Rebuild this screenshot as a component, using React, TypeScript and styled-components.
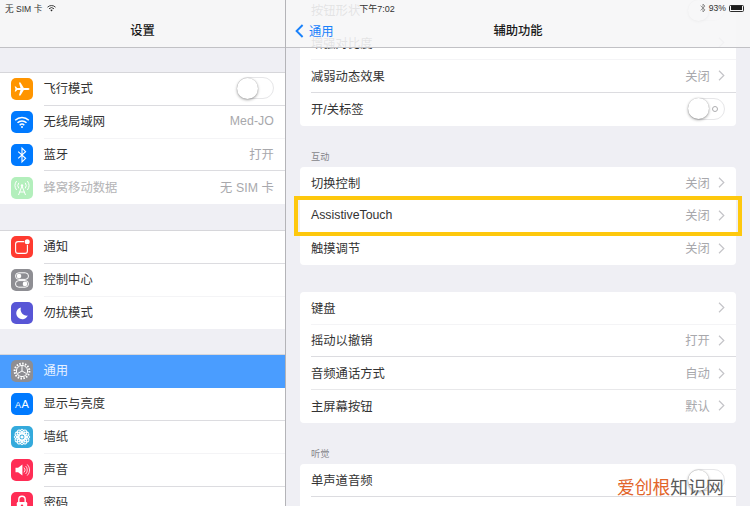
import * as React from "react";
import styled, { createGlobalStyle } from "styled-components";

const GlobalStyle = createGlobalStyle`
  html, body {
    margin: 0;
    padding: 0;
    background: #efeff4;
  }
  body {
    font-family: "Liberation Sans", "Noto Sans CJK SC", sans-serif;
    color: #1c1c1e;
  }
`;

const Screen = styled.div`
  position: relative;
  display: flex;
  width: 750px;
  height: 506px;
  overflow: hidden;
  background: #efeff4;
`;

const StatusBar = styled.div`
  position: absolute;
  z-index: 3;
  top: 0;
  left: 0;
  right: 0;
  height: 16px;
  display: grid;
  grid-template-columns: 1fr auto 1fr;
  align-items: center;
  padding: 0 5px;
  font-size: 8.6px;
  color: #333;
`;

const StatusLeft = styled.div`
  display: flex;
  align-items: center;
  gap: 5px;
`;

const StatusTime = styled.div`
  font-size: 9px;
  margin-left: 4px;
`;

const StatusRight = styled.div`
  display: flex;
  align-items: center;
  justify-content: flex-end;
  gap: 3px;
`;

const Battery = styled.div`
  display: flex;
  align-items: center;
  width: 15px;
  height: 7px;
  border: 1px solid #2a2a2a;
  border-radius: 1.5px;
  box-sizing: border-box;
  padding: 0.5px;
  margin-right: 1px;

  &::before {
    content: "";
    display: block;
    width: 93%;
    height: 100%;
    background: #1c1c1c;
  }
`;

const Master = styled.aside`
  flex: 0 0 285px;
  height: 506px;
  overflow: hidden;
  background: #efeff4;
  border-right: 1px solid #b4b4b8;
`;

const MasterBar = styled.header`
  height: 48px;
  box-sizing: border-box;
  border-bottom: 1px solid #c1c1c5;
  background: #f6f6f7;
  display: flex;
  align-items: flex-end;
  justify-content: center;
  padding-bottom: 7px;
`;

const BarTitle = styled.h1`
  margin: 0;
  font-size: 12.3px;
  line-height: 18px;
  font-weight: 500;
  color: #1a1a1a;
`;

const SideGroup = styled.section<{ $gap: number }>`
  margin-top: ${(p) => p.$gap}px;
  background: #fff;
  border-top: 1px solid #d6d6da;
`;

const SideRow = styled.div<{ $height: number; $selected?: boolean; $disabled?: boolean }>`
  height: ${(p) => p.$height}px;
  display: flex;
  align-items: center;
  padding-left: 11px;
  box-sizing: border-box;
  background: ${(p) => (p.$selected ? "#4a9dff" : "#fff")};
  color: ${(p) => (p.$selected ? "#e6f1ff" : p.$disabled ? "#b4b4b6" : "#333")};
`;

const SideBody = styled.div<{ $line?: string }>`
  flex: 1;
  height: 100%;
  margin-left: 10.5px;
  padding: 0 11px 1.5px 0;
  display: flex;
  align-items: center;
  justify-content: space-between;
  box-sizing: border-box;
  font-size: 12.3px;
  border-bottom: 1px solid ${(p) => p.$line || "transparent"};
`;

const IconTile = styled.span<{ $bg: string }>`
  flex: 0 0 22px;
  width: 22px;
  height: 22px;
  border-radius: 5px;
  background: ${(p) => p.$bg};
  display: flex;
  align-items: center;
  justify-content: center;
  color: #fff;
`;

const ValueText = styled.span`
  font-size: 12.3px;
  letter-spacing: 0.1px;
  color: #a8a8ac;
`;

const Detail = styled.main`
  position: relative;
  flex: 1;
  height: 506px;
  overflow: hidden;
`;

const DetailBar = styled.header`
  position: absolute;
  z-index: 2;
  top: 0;
  left: 0;
  right: 0;
  height: 48px;
  box-sizing: border-box;
  border-bottom: 1px solid #c1c1c5;
  background: rgba(246, 246, 247, 0.9);
  display: grid;
  grid-template-columns: 1fr auto 1fr;
  align-items: end;
  padding: 0 9px 7px;
`;

const BackLink = styled.div`
  display: flex;
  align-items: center;
  gap: 5px;
  height: 18px;
  font-size: 12.3px;
  color: #1a82fb;
`;

const DetailScroll = styled.div`
  margin-top: -5.5px;
  padding: 0 14px;
`;

const Card = styled.section`
  background: #fff;
  border-radius: 4px;
`;

const CardGap = styled.div`
  height: 26.5px;
`;

const SectionLabel = styled.div`
  height: 41.3px;
  box-sizing: border-box;
  padding: 0 0 4px 11px;
  display: flex;
  align-items: flex-end;
  font-size: 9.2px;
  line-height: 12px;
  color: #85858a;
`;

const DetailRow = styled.div<{ $highlight?: boolean }>`
  position: relative;
  height: 32.8px;
  box-sizing: border-box;
  margin-left: 11px;
  padding: 0 11px 1.5px 0;
  display: flex;
  align-items: center;
  justify-content: space-between;
  font-size: 12.3px;
  color: #333;

  ${(p) =>
    p.$highlight &&
    `&::after {
      content: "";
      position: absolute;
      top: -4px;
      bottom: -3px;
      left: -17px;
      right: -6px;
      border: 4px solid #fec80d;
    }`}
`;

const RowLine = styled.div<{ $line: string }>`
  height: 1px;
  margin-top: -1px;
  margin-left: 11px;
  position: relative;
  background: ${(p) => p.$line};
`;

const Trail = styled.div`
  display: flex;
  align-items: center;
  gap: 8px;
`;

const Toggle = styled.div`
  width: 37px;
  height: 22px;
  box-sizing: border-box;
  border: 1px solid #e6e6e8;
  border-radius: 11px;
  background: #fff;
  display: flex;
  align-items: center;
  justify-content: space-between;
  padding-right: 6px;
`;

const ToggleKnob = styled.span`
  width: 21px;
  height: 21px;
  margin-left: -1px;
  border-radius: 50%;
  background: #fff;
  box-shadow: 0 1px 3px rgba(0, 0, 0, 0.38), 0 0 1px rgba(0, 0, 0, 0.25);
`;

const ToggleMark = styled.span`
  width: 6px;
  height: 6px;
  box-sizing: border-box;
  border: 1px solid #adadb0;
  border-radius: 50%;
`;

const Watermark = styled.div`
  position: absolute;
  z-index: 4;
  left: 617px;
  top: 477px;
  font-size: 17.8px;
  line-height: 22px;
  white-space: nowrap;
  color: #5a5a5a;

  b {
    font-weight: 400;
    color: #e2652a;
  }
`;

function Chevron() {
  return (
    <svg width="7" height="11" viewBox="0 0 7 11" fill="none">
      <path d="M1 .8 5.8 5.5 1 10.2" stroke="#c4c4c8" strokeWidth="1.2" />
    </svg>
  );
}

function Glyph(props: { name: string }) {
  const w = { fill: "none", stroke: "#fff" };
  switch (props.name) {
    case "plane":
      return (
        <svg width="22" height="22" viewBox="0 0 22 22">
          <path fill="#fff" d="M18.5 11c0 .8-1 1.1-2 1.1h-3.7l-3.3 5.4H7.9l1.6-5.4H6.1l-1.2 1.5H3.7l.8-2.6-.8-2.6h1.2l1.2 1.5h3.4L7.9 4.5h1.6l3.3 5.4h3.7c1 0 2 .3 2 1.1z" />
        </svg>
      );
    case "wifi":
      return (
        <svg width="22" height="22" viewBox="0 0 22 22" {...w} strokeWidth="1.5">
          <path d="M4.2 9.2a9.8 9.8 0 0 1 13.6 0M6.5 11.8a6.5 6.5 0 0 1 9 0M8.7 14.2a3.3 3.3 0 0 1 4.6 0" />
          <circle cx="11" cy="16" r="1" fill="#fff" stroke="none" />
        </svg>
      );
    case "bluetooth":
      return (
        <svg width="22" height="22" viewBox="0 0 22 22" {...w} strokeWidth="1.1">
          <path d="M7.2 7.7 14.6 14.3 11 18V4L14.6 7.7 7.2 14.3" />
        </svg>
      );
    case "cell":
      return (
        <svg width="22" height="22" viewBox="0 0 22 22" {...w} strokeWidth="1">
          <path d="M11 9 7.5 18M11 9l3.5 9M8.6 15h4.8" />
          <circle cx="11" cy="8.5" r="1.2" fill="#fff" stroke="none" />
          <path d="M7.8 5.8a4.6 4.6 0 0 0 0 5.6M14.2 5.8a4.6 4.6 0 0 1 0 5.6M5.6 4a7.6 7.6 0 0 0 0 9M16.4 4a7.6 7.6 0 0 1 0 9" />
        </svg>
      );
    case "notify":
      return (
        <svg width="22" height="22" viewBox="0 0 22 22">
          <rect x="4.6" y="5.6" width="11.8" height="11.8" rx="2.5" fill="none" stroke="#fff" strokeWidth="1.1" />
          <circle cx="16.2" cy="5.8" r="3.2" fill="#ff3b30" />
          <circle cx="16.2" cy="5.8" r="2.5" fill="#fff" />
        </svg>
      );
    case "control":
      return (
        <svg width="22" height="22" viewBox="0 0 22 22">
          <rect x="4.5" y="3.8" width="13" height="6.6" rx="3.3" fill="none" stroke="#fff" strokeWidth="1" />
          <circle cx="8" cy="7.1" r="2.3" fill="#fff" />
          <rect x="4.5" y="11.6" width="13" height="6.6" rx="3.3" fill="none" stroke="#fff" strokeWidth="1" />
          <circle cx="14" cy="14.9" r="2.3" fill="#fff" />
        </svg>
      );
    case "moon":
      return (
        <svg width="22" height="22" viewBox="0 0 22 22">
          <path fill="#fff" d="M10 5.4a6 6 0 1 0 6.8 8.2 6.2 6.2 0 0 1-6.8-8.2z" />
        </svg>
      );
    case "gear":
      return (
        <svg width="22" height="22" viewBox="0 0 22 22" {...w}>
          <circle cx="11" cy="11" r="7.4" strokeWidth="2" strokeDasharray="1.5 1.4" />
          <circle cx="11" cy="11" r="5.6" strokeWidth="1" />
          <path d="M11 11V6M11 11l4.4 2.5M11 11l-4.4 2.5" strokeWidth="1" />
        </svg>
      );
    case "display":
      return (
        <svg width="22" height="22" viewBox="0 0 22 22" fill="#fff">
          <text x="4" y="15" fontSize="9" fontFamily="Liberation Sans, sans-serif">A</text>
          <text x="10.5" y="15" fontSize="11" fontFamily="Liberation Sans, sans-serif">A</text>
        </svg>
      );
    case "flower":
      return (
        <svg width="22" height="22" viewBox="0 0 22 22" {...w} strokeWidth="0.9">
          {[0, 30, 60, 90, 120, 150].map((a) => (
            <ellipse key={a} cx="11" cy="11" rx="3" ry="7.8" transform={`rotate(${a} 11 11)`} />
          ))}
          <circle cx="11" cy="11" r="1.6" fill="#fff" stroke="none" />
        </svg>
      );
    case "sound":
      return (
        <svg width="22" height="22" viewBox="0 0 22 22">
          <path fill="#fff" d="M4.5 8.8h2.6L11.4 5.6v10.8L7.1 13.2H4.5z" />
          <path fill="none" stroke="#fff" strokeWidth="0.8" d="M13 8.6a3.4 3.4 0 0 1 0 4.8M14.6 7a5.6 5.6 0 0 1 0 8M16.2 5.4a7.8 7.8 0 0 1 0 11.2" />
        </svg>
      );
    default:
      return (
        <svg width="22" height="22" viewBox="0 0 22 22">
          <path fill="none" stroke="#fff" strokeWidth="1.4" d="M7.8 10V7.4a3.2 3.2 0 0 1 6.4 0V10" />
          <rect x="5.8" y="10" width="10.4" height="8.5" rx="1.2" fill="#fff" />
          <circle cx="11" cy="13.6" r="1.2" fill="#ff2d55" />
        </svg>
      );
  }
}

function Switch(props: { mark?: boolean }) {
  return (
    <Toggle>
      <ToggleKnob />
      {props.mark && <ToggleMark />}
    </Toggle>
  );
}

interface ISideItem {
  icon: string;
  bg: string;
  label: string;
  value?: string;
  line?: string;
  toggle?: boolean;
  selected?: boolean;
  disabled?: boolean;
}

const strong = "#dcdce0";
const faint = "#f4f4f6";

const sideGroups: { gap: number; rowHeight: number; items: ISideItem[] }[] = [
  {
    gap: 24,
    rowHeight: 32.8,
    items: [
      { icon: "plane", bg: "#ff9500", label: "飞行模式", toggle: true, line: strong },
      { icon: "wifi", bg: "#007aff", label: "无线局域网", value: "Med-JO", line: faint },
      { icon: "bluetooth", bg: "#007aff", label: "蓝牙", value: "打开", line: strong },
      { icon: "cell", bg: "#b3efbc", label: "蜂窝移动数据", value: "无 SIM 卡", disabled: true },
    ],
  },
  {
    gap: 25.8,
    rowHeight: 32.8,
    items: [
      { icon: "notify", bg: "#ff3b30", label: "通知", line: strong },
      { icon: "control", bg: "#8e8e93", label: "控制中心", line: faint },
      { icon: "moon", bg: "#5856d6", label: "勿扰模式" },
    ],
  },
  {
    gap: 24.4,
    rowHeight: 33,
    items: [
      { icon: "gear", bg: "#8e8e93", label: "通用", selected: true },
      { icon: "display", bg: "#007aff", label: "显示与亮度", line: strong },
      { icon: "flower", bg: "#34aadc", label: "墙纸", line: faint },
      { icon: "sound", bg: "#ff2d55", label: "声音", line: strong },
      { icon: "lock", bg: "#ff2d55", label: "密码" },
    ],
  },
];

interface IDetailItem {
  label: string;
  value?: string;
  chevron?: boolean;
  toggle?: boolean;
  mark?: boolean;
  line?: string;
  highlight?: boolean;
}

const off = { value: "关闭", chevron: true };

const detailCards: { heading?: string; items: IDetailItem[] }[] = [
  {
    items: [
      { label: "按钮形状", toggle: true, mark: true },
      { label: "增强对比度", chevron: true, line: faint },
      { label: "减弱动态效果", ...off, line: strong },
      { label: "开/关标签", toggle: true, mark: true },
    ],
  },
  {
    heading: "互动",
    items: [
      { label: "切换控制", ...off },
      { label: "AssistiveTouch", ...off, highlight: true },
      { label: "触摸调节", ...off },
    ],
  },
  {
    items: [
      { label: "键盘", chevron: true, line: faint },
      { label: "摇动以撤销", value: "打开", chevron: true, line: strong },
      { label: "音频通话方式", value: "自动", chevron: true, line: "#e8e8ea" },
      { label: "主屏幕按钮", value: "默认", chevron: true },
    ],
  },
  {
    heading: "听觉",
    items: [
      { label: "单声道音频", toggle: true, line: strong },
      { label: "" },
    ],
  },
];

export default function App() {
  return (
    <Screen>
      <GlobalStyle />
      <StatusBar>
        <StatusLeft>
          <span>无 SIM 卡</span>
          <svg width="9" height="7" viewBox="0 0 9 7" fill="none" stroke="#2a2a2a" strokeWidth="0.9">
            <path d="M.5 2.2a5.6 5.6 0 0 1 8 0M2 3.8a3.5 3.5 0 0 1 5 0" />
            <path d="M3.3 5.1 4.5 6.6 5.7 5.1a1.8 1.8 0 0 0-2.4 0z" fill="#2a2a2a" stroke="none" />
          </svg>
        </StatusLeft>
        <StatusTime>下午7:02</StatusTime>
        <StatusRight>
          <svg width="6" height="10" viewBox="0 0 6 10" fill="none" stroke="#8a8a8a" strokeWidth="0.9">
            <path d="M.6 2.7 5 6.9 3 9V1L5 3.1.6 7.3" />
          </svg>
          <span>93%</span>
          <Battery />
        </StatusRight>
      </StatusBar>

      <Master>
        <MasterBar>
          <BarTitle>设置</BarTitle>
        </MasterBar>
        {sideGroups.map((group, g) => (
          <SideGroup key={g} $gap={group.gap}>
            {group.items.map((item) => (
              <SideRow key={item.label} $height={group.rowHeight} $selected={item.selected} $disabled={item.disabled}>
                <IconTile $bg={item.bg}>
                  <Glyph name={item.icon} />
                </IconTile>
                <SideBody $line={item.line}>
                  <span>{item.label}</span>
                  {item.value && <ValueText>{item.value}</ValueText>}
                  {item.toggle && <Switch />}
                </SideBody>
              </SideRow>
            ))}
          </SideGroup>
        ))}
      </Master>

      <Detail>
        <DetailBar>
          <BackLink>
            <svg width="9" height="14" viewBox="0 0 9 14" fill="none">
              <path d="M7.6 1 1.6 7l6 6" stroke="#1a82fb" strokeWidth="1.9" />
            </svg>
            <span>通用</span>
          </BackLink>
          <BarTitle>辅助功能</BarTitle>
        </DetailBar>
        <DetailScroll>
          {detailCards.map((card, c) => (
            <React.Fragment key={c}>
              {card.heading ? <SectionLabel>{card.heading}</SectionLabel> : c > 0 && <CardGap />}
              <Card>
                {card.items.map((item, i) => (
                  <React.Fragment key={i}>
                    <DetailRow $highlight={item.highlight}>
                      <span>{item.label}</span>
                      <Trail>
                        {item.value && <ValueText>{item.value}</ValueText>}
                        {item.chevron && <Chevron />}
                        {item.toggle && <Switch mark={item.mark} />}
                      </Trail>
                    </DetailRow>
                    {item.line && <RowLine $line={item.line} />}
                  </React.Fragment>
                ))}
              </Card>
            </React.Fragment>
          ))}
        </DetailScroll>
      </Detail>

      <Watermark>
        <b>爱创根</b>知识网
      </Watermark>
    </Screen>
  );
}
